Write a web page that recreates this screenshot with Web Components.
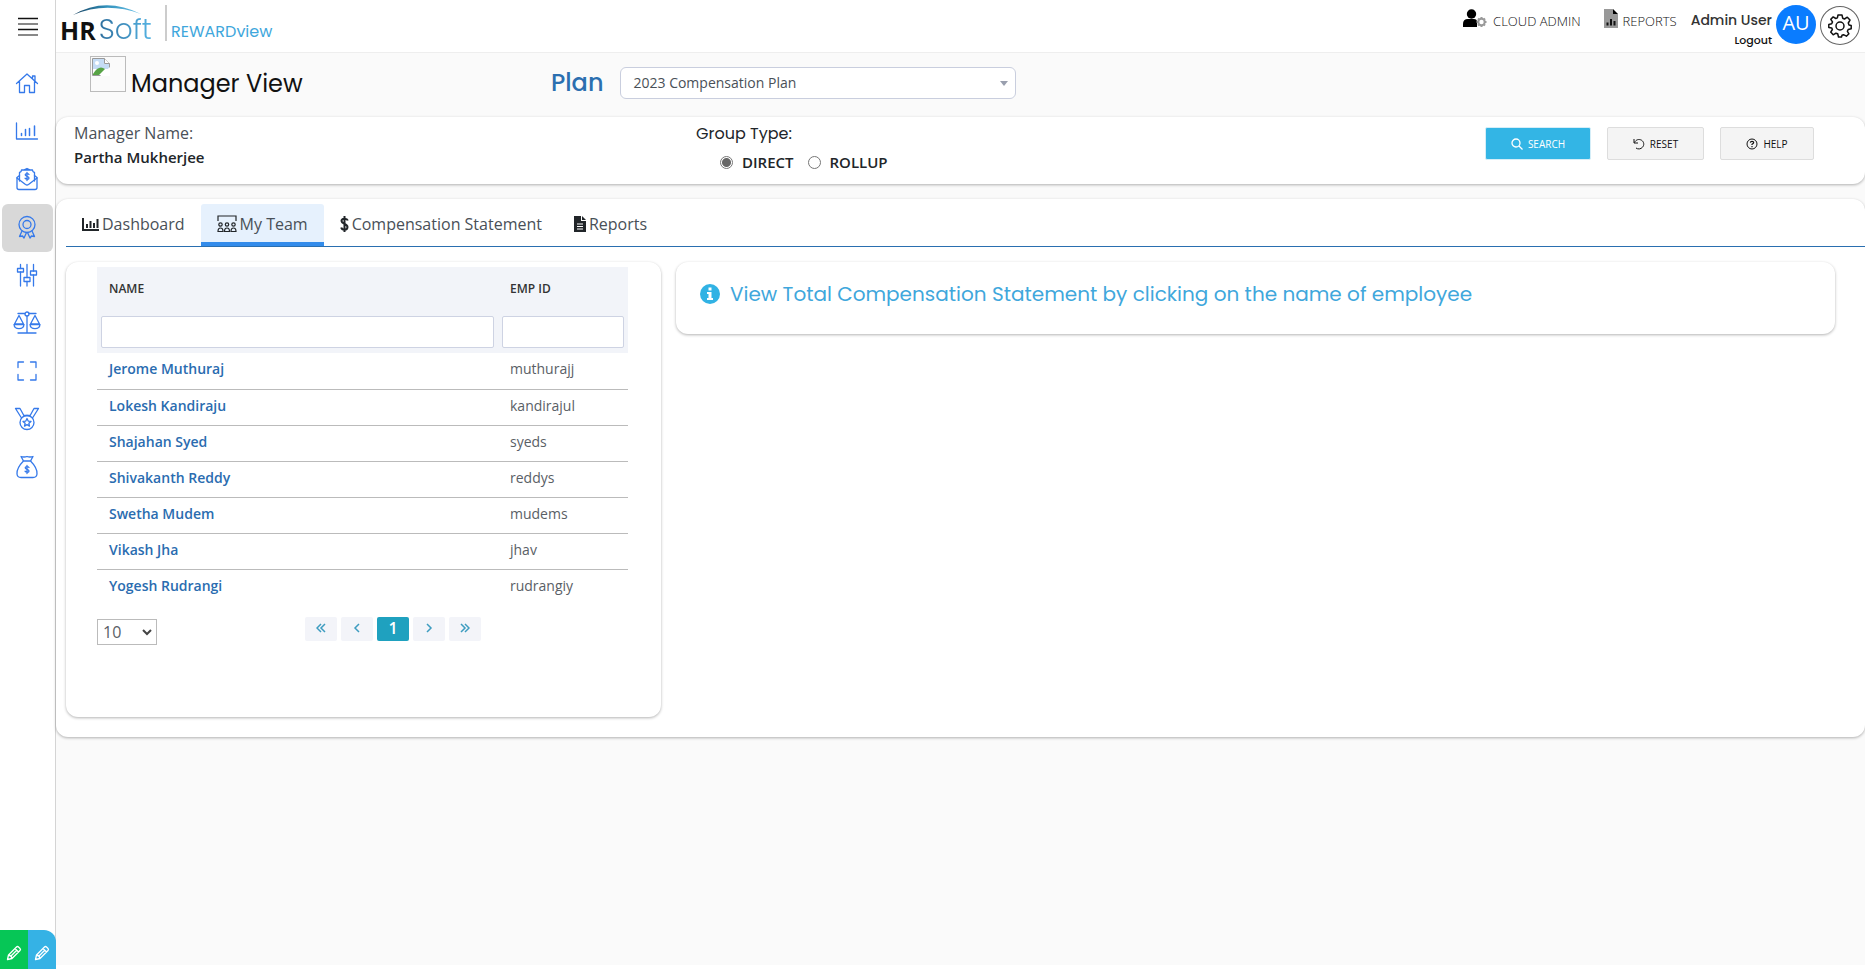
<!DOCTYPE html>
<html lang="en">
<head>
<meta charset="utf-8">
<title>Manager View</title>
<style>
html,body{margin:0;height:100%}
body{font-family:"Open Sans","Noto Sans",sans-serif;font-size:16px;color:#212529;background:#fff;
--display:Poppins,Inter,"Open Sans",sans-serif;--blue:#3fa7dc;--link:#2a6cb0}
</style>
</head>
<body>
<hr-app></hr-app>
<script>
const S='fill="none" stroke="currentColor" stroke-width="1.3" stroke-linecap="round" stroke-linejoin="round"';
const ICONS={
menu:[20,20,'<path d="M0 1.5h20M0 12.500h20" stroke="#111" stroke-width="1.500"/><path d="M0 7h20M0 18h20" stroke="#888" stroke-width="2"/>'],
home:[24,24,`<g ${S}><path d="M1.500 12.500 12 3l10.500 9.500M4.500 10.500V21.500h5v-7h5v7h5v-11M17.500 7.500V5h2.500v5"/></g>`],
chart:[24,24,`<g ${S}><path d="M1.500 4v16h21"/><path d="M6.500 16.500v-2M10.500 16.500v-6M14.500 16.500v-7M19.500 16.500V7" stroke-width="1.500"/></g>`],
mail:[24,24,`<g ${S}><path d="M4.500 8.500 2 10.500v10q0 2 2 2h16q2 0 2-2v-10l-2.500-2"/><path d="M4.500 14V5.500q2-.5 2-2.500h11q0 2 2 2.500V14M8.500 3l3.500-1.500L15.500 3"/><path d="m2 11 8.500 6.500q1.500 1 3 0L22 11"/><path d="M14 7.500c-1-1.500-4-1-3.800.5.3 1.700 3.800 1 3.800 3 0 1.600-3 1.700-4 .2M12 5.500v8"/></g>`],
award:[24,24,`<g ${S}><circle cx="12" cy="9.500" r="8"/><circle cx="12" cy="9.500" r="4"/><path d="M7 16l-2.500 5.500 3-.5 1.500 2 2.500-5.500M17 16l2.500 5.500-3-.5-1.500 2-2.500-5.500"/></g>`],
sliders:[24,24,`<g ${S}><path d="M5.500 1.500v4M5.500 9v14M12 1.500v13M12 18.500V23M18.500 1.500V8M18.500 12v11"/><rect x="2.500" y="5.500" width="6" height="3.500"/><rect x="9" y="14.500" width="6" height="4"/><rect x="15.500" y="8" width="6" height="4"/></g>`],
scale:[28,24,`<g ${S}><path d="M5 2.500h7M16 2.500h7M14 5v17M5 22h18"/><circle cx="14" cy="3" r="2"/><path d="M6 4.500 1.500 13h9zM22 4.500 17.500 13h9zM1 13.500c.5 5.500 9.500 5.500 10 0zM17 13.500c.5 5.500 9.500 5.500 10 0z"/></g>`],
expand:[24,24,`<g ${S}><path d="M3 8.500V3h5.500M15.500 3H21v5.500M21 15.500V21h-5.500M8.500 21H3v-5.500"/></g>`],
medal:[26,24,`<g ${S}><circle cx="13" cy="15.500" r="7"/><path d="m10 8.800-4-7.300H1.500l6 9.500M16 8.800l4-7.300h4.500l-6 9.500M10 8.500h6M13 11.500l1.200 2.600 2.800.3-2.100 1.900.6 2.800-2.500-1.500-2.500 1.500.6-2.800-2.100-1.900 2.800-.3z"/></g>`],
bag:[24,24,`<g ${S}><path d="M8.500 6 6 1.500q3 1 6 0 3 1 6 0L15.500 6q7 7 6.500 13-.3 3.500-4 3.500H6q-3.700 0-4-3.500Q1.500 13 8.500 6zM8 6h8"/><path d="M14 12.500c-1-1.500-4-1-3.800.5.3 1.700 3.800 1 3.800 3 0 1.600-3 1.700-4 .2M12 10.500v8"/></g>`],
pencil:[16,16,'<g fill="none" stroke="#fff" stroke-width="1.300" stroke-linejoin="round"><path d="m1.500 14.500 1-4.500 8-8q1-1 2 0l1.500 1.500q1 1 0 2l-8 8zM9 3.500l3.500 3.500M2.500 10q3 .5 3.500 3.500M4.500 11.500l6.500-6.500"/></g>'],
bars:[17,14,'<path d="M1 1v12h16" fill="none" stroke="currentColor" stroke-width="2"/><path d="M5 11V7M8.500 11V4M12 11V6M15.500 11V2" stroke="currentColor" stroke-width="2"/>'],
team:[20,18,'<g fill="none" stroke="currentColor" stroke-width="1.200"><path d="M1 6V1h18v5"/><circle cx="3.500" cy="9.500" r="1.700"/><circle cx="10" cy="9.500" r="1.700"/><circle cx="16.500" cy="9.500" r="1.700"/><path d="M1 16.500q0-3.500 2.500-3.500T6 16.500zM7.500 16.500q0-3.500 2.500-3.500t2.500 3.500zM14 16.500q0-3.500 2.500-3.500t2.500 3.500z"/></g>'],
dollar:[9,18,'<path d="M7.800 5.500C7 3 1.500 3 1.500 6s6 2.500 6 6-5.500 3.500-6.300.5M4.500 1v16" fill="none" stroke="currentColor" stroke-width="2"/>'],
file:[12,16,'<path d="M0 0h7v5h5v11H0zM8 0l4 4H8z" fill="currentColor"/><path d="M3 8h6M3 10.500h6M3 13h6" stroke="#fff"/>'],
search:[12,12,'<g fill="none" stroke="currentColor" stroke-width="1.300"><circle cx="5" cy="5" r="4"/><path d="m8 8 3.500 3.500"/></g>'],
reset:[12,12,'<path d="M1 1v4h4M1.500 4.500C3 1.500 6 .8 8.500 2.200c2.500 1.500 3 5 1 7-1.700 2-4.500 2.300-6.500.8" fill="none" stroke="currentColor" stroke-width="1"/>'],
help:[12,12,'<g fill="none" stroke="currentColor"><circle cx="6" cy="6" r="5"/><path d="M4.300 4.700Q4.500 3.300 6 3.300q1.700 0 1.700 1.300Q7.700 5.500 6 6.300V7M6 8v1.200" stroke-width="1.200"/></g>'],
info:[20,20,'<circle cx="10" cy="10" r="10" fill="#31b2e4"/><path d="M8.500 3.500h3v3h-3zM7 8h4.500v6H13v2H7v-2h1.500v-4H7z" fill="#fff"/>'],
admin:[24,20,'<circle cx="8.500" cy="5" r="4.700"/><path d="M0 18v-3q0-5 5-5h6q3 0 3 3v5z"/><circle cx="18.500" cy="13" r="4.500" fill="#fff"/><circle cx="18.500" cy="13" r="3.200" fill="none" stroke="#9a9a9a" stroke-width="2"/><path d="M18.500 8v1.500m0 7V18m-5-5H15m7 0h1.500m-8.500-3.500 1 1m5 5 1 1m0-7-1 1m-5 5-1 1" stroke="#9a9a9a" stroke-width="2"/>'],
report:[14,20,'<path d="M0 0h9v5h5v14H0z" fill="#999"/><path d="m9 0 5 5H9z"/><path d="M3.500 16.500v-3M7 16.500V10M10.500 16.500V12" stroke="#111" stroke-width="2"/>'],
gear:[24,24,'<g fill="none" stroke="#111" stroke-width="1.500" stroke-linejoin="round"><circle cx="12" cy="12" r="4"/><path d="M10 1h4l.7 3.200 1.800.8 2.800-1.800 2.700 2.900L20.300 9l.7 2 2.200.5v3.200l-3 .8-.8 1.800 1.500 2.500-2.500 2.400-2.900-1.500-1.500.6L13.500 23h-3l-.8-3.200-1.800-.6-2.700 1.600-2.500-2.700 1.700-2.600-.7-1.600L.8 13.500v-3L3.700 9.800l.8-1.900-1.700-2.600 2.400-2.400 2.600 1.600 1.600-.6z"/></g>'],
down:[8,5,'<path d="M0 0h8L4 5z" fill="#999fae"/>'],
chev:[10,7,'<path d="m1 1 4 4 4-4" fill="none" stroke="#444" stroke-width="2"/>'],
first:[10,10,'<path d="M5 1 1 5l4 4M9 1 5 5l4 4" fill="none" stroke="#3d9cc0" stroke-width="1.500"/>'],
prev:[10,10,'<path d="M7 1 3 5l4 4" fill="none" stroke="#3d9cc0" stroke-width="1.500"/>'],
next:[10,10,'<path d="m3 1 4 4-4 4" fill="none" stroke="#3d9cc0" stroke-width="1.500"/>'],
last:[10,10,'<path d="m1 1 4 4-4 4M5 1l4 4-4 4" fill="none" stroke="#3d9cc0" stroke-width="1.500"/>'],
broken:[18,18,'<path d="M.5.500h12l5 5v12H.5z" fill="#fff" stroke="#9a9a9a"/><path d="M1 1h11v5h5v5H1z" fill="#c5dcf5"/><path d="M12.500.500v5h5" fill="#fff" stroke="#9a9a9a"/><circle cx="5" cy="5" r="2" fill="#fff"/><path d="M1 16q5-8 10-6l2 1-6 6H1z" fill="#57a345"/><path d="M8 18 18 9v9z" fill="#fff"/>']
};
function define(name,html,after){
  const t=document.createElement('template');t.innerHTML=html;
  customElements.define(name,class extends HTMLElement{
    connectedCallback(){
      if(this.shadowRoot)return;
      this.attachShadow({mode:'open'}).append(t.content.cloneNode(true));
      if(after)after(this,this.shadowRoot);
    }
  });
}
define('hr-icon','<style>:host{display:inline-flex;flex:none}svg{display:block}</style>',(el,r)=>{
  const [w,h,body]=ICONS[el.getAttribute('name')];
  r.innerHTML+=`<svg width="${w}" height="${h}" viewBox="0 0 ${w} ${h}" aria-hidden="true">${body}</svg>`;
});
define('hr-card',`<style>:host{display:block;box-sizing:border-box;background:#fff;border-radius:12px;box-shadow:0 1px 3px rgba(0,0,0,.3)}</style><slot></slot>`);

define('hr-sidebar',`<style>
:host{display:flex;flex-direction:column;box-sizing:border-box;width:56px;border-right:1px solid #d4d4d4;background:#fff;flex:none}
button{border:0;background:none;padding:0;display:flex;justify-content:center;align-items:center;cursor:pointer}
.menu{height:54px;margin-bottom:6px}
nav{display:flex;flex-direction:column;padding:0 2px;flex:1}
a{display:flex;align-items:center;justify-content:center;height:48px;border-radius:6px;color:#3579ea;box-sizing:border-box;padding:0 2px 2px 0}
a[aria-current]{background:#d8d8d8}
.edit{display:flex;height:39px;margin-right:-1px}
.edit button{flex:1;background:#06c656;padding-top:6px}
.edit button+button{background:#35b2e5;border-radius:0 12px 0 0}
</style>
<button class="menu" aria-label="Menu"><hr-icon name="menu"></hr-icon></button>
<nav>
<a href="#" aria-label="Home"><hr-icon name="home"></hr-icon></a>
<a href="#" aria-label="Analytics"><hr-icon name="chart"></hr-icon></a>
<a href="#" aria-label="Offers"><hr-icon name="mail"></hr-icon></a>
<a href="#" aria-label="Rewards" aria-current="page"><hr-icon name="award"></hr-icon></a>
<a href="#" aria-label="Settings"><hr-icon name="sliders"></hr-icon></a>
<a href="#" aria-label="Equity"><hr-icon name="scale"></hr-icon></a>
<a href="#" aria-label="Full screen"><hr-icon name="expand"></hr-icon></a>
<a href="#" aria-label="Recognition"><hr-icon name="medal"></hr-icon></a>
<a href="#" aria-label="Pay"><hr-icon name="bag"></hr-icon></a>
</nav>
<div class="edit"><button aria-label="Edit"><hr-icon name="pencil"></hr-icon></button><button aria-label="Edit page"><hr-icon name="pencil"></hr-icon></button></div>`);

define('hr-header',`<style>
:host{display:flex;align-items:flex-start;height:53px;box-sizing:border-box;padding:5px 5px 0 4px;border-bottom:1px solid #eee;background:#fff}
.logo{display:flex;flex-direction:column;width:100px}
.logo svg{display:block;margin-left:13px}
.word{font-size:25px;line-height:32px;font-weight:700;color:#111;display:flex;gap:3px;margin-top:-2px}
.word span{font-family:var(--display);font-size:28px;font-weight:300;background:linear-gradient(90deg,#2e6f9e,#55b4e4);background-clip:text;color:transparent}
.product{border-left:2px solid #ccc;height:36px;box-sizing:border-box;margin-left:5px;padding:15px 0 0 4px;font:400 16px/24px var(--display);color:var(--blue)}
.links{margin-left:auto;display:flex;align-items:flex-start}
a{color:#111;text-decoration:none}
.link{display:flex;align-items:center;gap:6px;font-size:13px;line-height:20px;font-weight:300;height:20px;padding-top:6px;margin-right:23px}
.link hr-icon{margin-top:-4px}
.link:nth-child(2){gap:5px;margin-right:14px}
.user{display:flex;flex-direction:column;align-items:flex-end;font:500 14px/20px var(--display);margin-right:4px;padding-top:5px;color:#333}
.user a{font-size:11px;line-height:20px}
.av,.gear{width:40px;height:39px;border-radius:50%;box-sizing:border-box;display:flex;align-items:center;justify-content:center}
.av{background:#0a7cff;color:#fff;font-size:20px;line-height:24px;margin-right:4px;padding-bottom:3px}
.gear{border:1px solid #666;background:#fff;padding:0;margin-top:1px}
</style>
<div class="logo"><svg width="68" height="11" viewBox="0 0 68 11"><defs><linearGradient id="g"><stop stop-color="#17405f"/><stop offset=".5" stop-color="#3292bd"/><stop offset="1" stop-color="#6fc4ea"/></linearGradient></defs><path d="M0 10Q32-9 68 9 33-4 0 10z" fill="url(#g)"/></svg><div class="word">HR<span>Soft</span></div></div>
<div class="product">REWARDview</div>
<div class="links">
<a class="link" href="#"><hr-icon name="admin"></hr-icon>CLOUD ADMIN</a>
<a class="link" href="#"><hr-icon name="report"></hr-icon>REPORTS</a>
<div class="user"><span>Admin User</span><a href="#">Logout</a></div>
<div class="av">AU</div><button class="gear" aria-label="Settings"><hr-icon name="gear"></hr-icon></button>
</div>`);

define('hr-title',`<style>
:host{display:grid;grid-template-columns:495px 1fr;height:64px}
.t{display:flex;padding:3px 0 0 34px;gap:5px}
.img{width:36px;height:36px;box-sizing:border-box;border:1px solid #bbb;padding:1px}
h1{margin:0;font:400 24px/36px var(--display);color:#111;padding-top:10px}
.p{display:flex;align-items:flex-start;gap:17px;padding-top:14px}
label{font:500 24px/32px var(--display);color:#2b6fb0}
.sel{display:flex;align-items:center;width:396px}
select{appearance:none;width:100%;height:32px;border:1px solid #c9cede;border-radius:6px;background:#fff;padding:0 12px;font:14px/20px "Open Sans",sans-serif;color:#495057}
.sel hr-icon{margin-left:-16px;pointer-events:none}
</style>
<div class="t"><div class="img"><hr-icon name="broken"></hr-icon></div><h1>Manager View</h1></div>
<div class="p"><label for="plan">Plan</label><div class="sel"><select id="plan"><option>2023 Compensation Plan</option></select><hr-icon name="down"></hr-icon></div></div>`);

define('hr-filter',`<style>
:host{display:grid;grid-template-columns:622px 1fr auto;height:67px;padding:4px 51px 0 18px;box-sizing:border-box}
.m{line-height:24px;color:#495057}
.m strong{display:block;font-size:15px;font-weight:600;color:#212529}
.gt{font:400 16px/24px var(--display);padding-top:1px}
.g{display:flex;align-items:center;font-size:15px;line-height:24px;padding-left:24px;font-weight:600;margin-top:4px;color:#212529}
input{margin:0 9px 0 0;width:13px;height:13px;accent-color:#666}
input:checked{appearance:none;border:1px solid #767676;border-radius:50%;background:radial-gradient(#666 0 4px,#fff 5px)}
label+input{margin-left:14px}
.b{display:flex;gap:16px;padding-top:6px}
button{display:flex;align-items:center;justify-content:center;gap:5px;height:33px;border:1px solid #ddd;border-radius:2px;background:#f4f4f4;font:10px/14px "Open Sans",sans-serif;color:#111;width:97px}
.s{background:#33b5e5;color:#fff;width:106px;border-color:#d5eef8}
.h{width:94px}
</style>
<div class="m">Manager Name:<strong>Partha Mukherjee</strong></div>
<div><div class="gt">Group Type:</div><div class="g"><input type="radio" name="g" id="d" checked><label for="d">DIRECT</label><input type="radio" name="g" id="r"><label for="r">ROLLUP</label></div></div>
<div class="b"><button class="s"><hr-icon name="search"></hr-icon>SEARCH</button><button><hr-icon name="reset"></hr-icon>RESET</button><button class="h"><hr-icon name="help"></hr-icon>HELP</button></div>`);

define('hr-tabs',`<style>
:host{display:flex;border-bottom:1px solid #2a6fb0;margin-left:10px;padding-top:5px}
a{display:flex;align-items:center;gap:3px;height:42px;box-sizing:border-box;padding:2px 16px 0;border-bottom:4px solid transparent;color:#495057;text-decoration:none;border-radius:3px 3px 0 0}
a hr-icon{color:#212529}
a[aria-selected=true]{background:#e6f1fd;border-color:#338ceb}
</style>
<a href="#" role="tab"><hr-icon name="bars"></hr-icon>Dashboard</a>
<a href="#" role="tab" aria-selected="true"><hr-icon name="team"></hr-icon>My Team</a>
<a href="#" role="tab"><hr-icon name="dollar"></hr-icon>Compensation Statement</a>
<a href="#" role="tab"><hr-icon name="file"></hr-icon>Reports</a>`);

define('hr-team',`<style>
:host{display:block;padding:5px 33px 72px 31px}
table{width:100%;border-collapse:collapse;font-size:14px;line-height:20px;table-layout:fixed}
.c2{width:130px}
th{background:#f2f4f9;text-align:left;font-size:12px;font-weight:600;color:#333;padding:0 12px;height:44px}
.f th{height:42px;padding:0 4px}
input{display:block;box-sizing:border-box;width:100%;height:32px;border:1px solid #ced3e3;border-radius:2px;background:#fff}
td{height:36px;padding:0 12px 3px;box-sizing:border-box;border-bottom:1px solid #bbb;color:#5a6066}
tr:last-child td{border-bottom:0}
td a{font-weight:600;color:var(--link);text-decoration:none}
.foot{display:grid;grid-template-columns:149px 1fr;margin-top:12px;align-items:start;height:28px}
.n{display:flex;align-items:center;width:60px;padding-top:2px}
select{appearance:none;width:60px;height:26px;border:1px solid #bbb;background:#fff;padding:0 5px;font:400 16px/24px "Open Sans",sans-serif;color:#5a6066}
.n hr-icon{margin-left:-15px;pointer-events:none}
.pg{display:flex;gap:4px;padding-left:59px}
.pg button{width:32px;height:24px;border:0;border-radius:2px;background:#f3f4f9;display:flex;align-items:center;justify-content:center;font:600 16px/20px "Open Sans",sans-serif;padding:0 0 2px}
.pg .on{background:#1fa1bf;color:#fff}
</style>
<table><colgroup><col><col class="c2"></colgroup><thead><tr><th id="n">NAME</th><th id="e">EMP ID</th></tr><tr class="f"><th><input aria-labelledby="n"></th><th><input aria-labelledby="e"></th></tr></thead><tbody></tbody></table>
<div class="foot"><div class="n"><select aria-label="Rows per page"><option>10</option></select><hr-icon name="chev"></hr-icon></div>
<div class="pg"><button aria-label="First"><hr-icon name="first"></hr-icon></button><button aria-label="Previous"><hr-icon name="prev"></hr-icon></button><button class="on">1</button><button aria-label="Next"><hr-icon name="next"></hr-icon></button><button aria-label="Last"><hr-icon name="last"></hr-icon></button></div></div>`,
(el,r)=>{r.querySelector('tbody').innerHTML=[['Jerome Muthuraj','muthurajj'],['Lokesh Kandiraju','kandirajul'],['Shajahan Syed','syeds'],['Shivakanth Reddy','reddys'],['Swetha Mudem','mudems'],['Vikash Jha','jhav'],['Yogesh Rudrangi','rudrangiy']].map(([a,b])=>`<tr><td><a href="#">${a}</a></td><td>${b}</td></tr>`).join('')});

define('hr-app',`<style>
:host{display:flex;min-height:100vh}
.main{flex:1;min-width:0;display:flex;flex-direction:column}
main{flex:1;background:#fafafa;margin-bottom:4px}
.page{margin-top:15px}
.cols{display:grid;grid-template-columns:minmax(0,595fr) minmax(0,1159fr);gap:15px;padding:15px 30px 20px 10px;align-items:start}
.info{display:flex;align-items:flex-start;gap:10px;padding:20px 24px 28px;font:400 20px/24px var(--display);color:var(--blue)}
.info hr-icon{padding-top:2px}
</style>
<hr-sidebar></hr-sidebar>
<div class="main"><hr-header></hr-header>
<main><hr-title></hr-title><hr-card><hr-filter></hr-filter></hr-card>
<hr-card class="page"><hr-tabs role="tablist"></hr-tabs>
<div class="cols"><hr-card><hr-team></hr-team></hr-card><hr-card><div class="info"><hr-icon name="info"></hr-icon><span>View Total Compensation Statement by clicking on the name of employee</span></div></hr-card></div></hr-card>
</main></div>`);
</script>
</body>
</html>
